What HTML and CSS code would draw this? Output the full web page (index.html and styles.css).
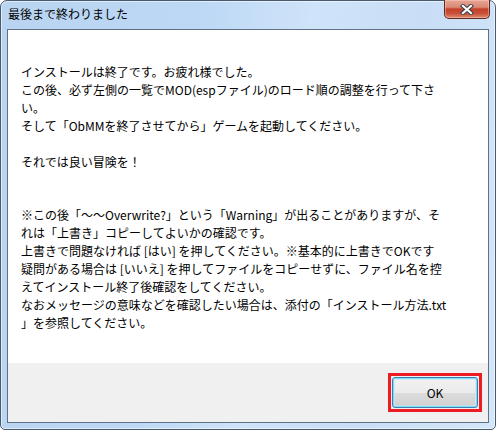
FILE: index.html
```html
<!DOCTYPE html>
<html lang="ja">
<head>
<meta charset="utf-8">
<title>最後まで終わりました</title>
<link rel="stylesheet" href="styles.css">
</head>
<body>
<div class="window">
  <div class="titlebar">
    <span class="title">最後まで終わりました</span>
    <button class="close" aria-label="閉じる">
      <svg width="14" height="11" viewBox="0 0 14 11">
        <path d="M3 2 L11 9 M11 2 L3 9" stroke="#3a3f4a" stroke-width="4.2" stroke-linecap="square" fill="none"/>
        <path d="M3 2 L11 9 M11 2 L3 9" stroke="#ffffff" stroke-width="2.2" stroke-linecap="square" fill="none"/>
      </svg>
    </button>
  </div>
  <div class="client">
    <div class="content">
      <p class="line">インストールは終了です。お疲れ様でした。</p>
      <p class="line">この後、必ず左側の一覧でMOD(espファイル)のロード順の調整を行って下さ</p>
      <p class="line">い。</p>
      <p class="line">そして「ObMMを終了させてから」ゲームを起動してください。</p>
      <p class="line">&nbsp;</p>
      <p class="line">それでは良い冒険を！</p>
      <p class="line">&nbsp;</p>
      <p class="line">&nbsp;</p>
      <p class="line">※この後「～～Overwrite?」という「Warning」が出ることがありますが、そ</p>
      <p class="line">れは「上書き」コピーしてよいかの確認です。</p>
      <p class="line">上書きで問題なければ [はい] を押してください。※基本的に上書きでOKです</p>
      <p class="line">疑問がある場合は [いいえ] を押してファイルをコピーせずに、ファイル名を控</p>
      <p class="line">えてインストール終了後確認をしてください。</p>
      <p class="line">なおメッセージの意味などを確認したい場合は、添付の「インストール方法.txt</p>
      <p class="line">」を参照してください。</p>
    </div>
    <div class="footer">
      <div class="highlight">
        <button class="ok">OK</button>
      </div>
    </div>
  </div>
</div>
</body>
</html>
```
FILE: styles.css
```css
* { box-sizing: border-box; }
html, body {
  margin: 0;
  padding: 0;
  background: #ffffff;
}
body {
  font-family: "Noto Sans CJK JP", "Noto Sans", sans-serif;
  font-size: 12px;
  color: #000;
}
.window {
  width: 496px;
  height: 430px;
  border: 1px solid #4a5a6e;
  border-radius: 7px 7px 5px 5px;
  background: linear-gradient(100deg, #b9d4f1 0%, #bcd8f5 35%, #cfe3f9 55%, #c9def6 75%, #d4e6fa 100%);
  display: flex;
  flex-direction: column;
  box-shadow: inset 0 0 0 1px rgba(255,255,255,0.55);
}
.titlebar {
  height: 28px;
  display: flex;
  align-items: flex-start;
  justify-content: space-between;
  padding: 0 5px 0 7px;
}
.title {
  margin-top: 5px;
  font-size: 12px;
  line-height: 16px;
  color: #000;
}
.close {
  width: 46px;
  height: 19px;
  margin: -1px 0 0 0;
  padding: 0;
  border: 1px solid #5e2a22;
  border-top: none;
  border-radius: 0 0 5px 5px;
  background: linear-gradient(to bottom, #e7a594 0%, #d98a74 40%, #c3412a 50%, #c9503a 75%, #df8b6e 100%);
  box-shadow: inset 0 0 0 1px rgba(255,210,200,0.45);
  display: flex;
  align-items: center;
  justify-content: center;
}
.close svg { display: block; }
.client {
  flex: 1;
  margin: 0 6px 6px 6px;
  border: 1px solid #5f7186;
  display: flex;
  flex-direction: column;
  background: #ffffff;
}
.content {
  flex: 1;
  background: #ffffff;
  padding: 33px 0 0 13px;
}
.line {
  margin: 0;
  line-height: 17.9px;
  white-space: nowrap;
}
.footer {
  height: 59px;
  background: #f0f0f0;
  display: flex;
  align-items: center;
  justify-content: flex-end;
  padding-right: 6px;
}
.highlight {
  border: 3px solid #ed1c24;
  padding: 1px;
  display: flex;
}
.ok {
  width: 86px;
  height: 31px;
  border: 1px solid #3c7fb1;
  border-radius: 3px;
  background: linear-gradient(to bottom, #f2f2f2 0%, #ebebeb 50%, #dddddd 51%, #cfcfcf 100%);
  box-shadow: inset 0 0 0 1px #7fdcf9, inset 0 0 0 2px rgba(190,235,250,0.6);
  font-family: "Noto Sans CJK JP", "Noto Sans", sans-serif;
  font-size: 12px;
  color: #000;
  padding: 0;
}
```
